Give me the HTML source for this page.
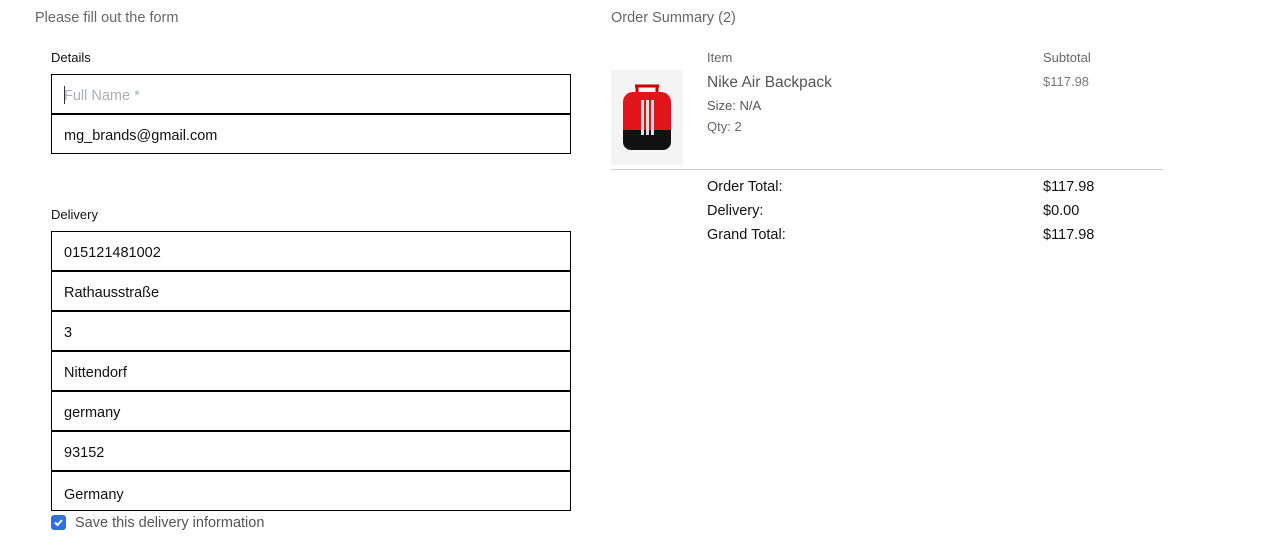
<!DOCTYPE html><html><head><style>
body{margin:0;width:1282px;height:548px;background:#fff;font-family:"Liberation Sans",sans-serif;position:relative;overflow:hidden}
.a{position:absolute;white-space:nowrap}
.box{position:absolute;left:51px;width:518px;height:38px;border:1px solid #000;font-size:14.5px;color:#111}
.box span{position:absolute;left:12px;top:13px}
</style></head><body>
<div class="a" style="left:35px;top:10px;font-size:14.5px;color:#666">Please fill out the form</div>
<div class="a" style="left:51px;top:50px;font-size:13px;color:#111">Details</div>
<div class="box" style="top:74px"><span style="color:#a8b0b8">Full Name *</span><div style="position:absolute;left:12px;top:11px;width:1px;height:18px;background:#333"></div></div>
<div class="box" style="top:114px"><span>mg_brands@gmail.com</span></div>
<div class="a" style="left:51px;top:207px;font-size:13px;color:#111">Delivery</div>
<div class="box" style="top:231px"><span>015121481002</span></div>
<div class="box" style="top:271px"><span>Rathausstraße</span></div>
<div class="box" style="top:311px"><span>3</span></div>
<div class="box" style="top:351px"><span>Nittendorf</span></div>
<div class="box" style="top:391px"><span>germany</span></div>
<div class="box" style="top:431px"><span>93152</span></div>
<div class="box" style="top:471px;overflow:hidden"><span style="top:15px">Germany</span></div>
<div class="a" style="left:51px;top:515px;width:15px;height:15px;background:#2f6fe8;border-radius:3px"><svg width="15" height="15"><path d="M4 7.5l2.5 2.5 4.5-5" stroke="#fff" stroke-width="2" fill="none"/></svg></div>
<div class="a" style="left:75px;top:515px;font-size:14.5px;color:#555">Save this delivery information</div>

<div class="a" style="left:611px;top:10px;font-size:14.5px;color:#666">Order Summary (2)</div>
<div class="a" style="left:707px;top:50px;font-size:13px;color:#666">Item</div>
<div class="a" style="left:1043px;top:50px;font-size:13px;color:#666">Subtotal</div>
<div class="a" style="left:611px;top:70px;width:72px;height:95px;background:#f4f4f4">
<svg width="72" height="95"><path d="M24 16h24" stroke="#c00" stroke-width="3"/><path d="M26 16v8M46 16v8" stroke="#c00" stroke-width="3"/><rect x="12" y="22" width="48" height="52" rx="10" fill="#e0141a"/><path d="M12 60h48v12a8 8 0 0 1-8 8H20a8 8 0 0 1-8-8z" fill="#111"/><rect x="30" y="30" width="3" height="35" fill="#ddd"/><rect x="35" y="30" width="3" height="35" fill="#ddd"/><rect x="40" y="30" width="3" height="35" fill="#ddd"/></svg></div>
<div class="a" style="left:707px;top:74px;font-size:15.5px;color:#555">Nike Air Backpack</div>
<div class="a" style="left:707px;top:98px;font-size:13px;color:#555">Size: N/A</div>
<div class="a" style="left:707px;top:119px;font-size:13px;color:#667">Qty: 2</div>
<div class="a" style="left:1043px;top:74px;font-size:13px;color:#777">$117.98</div>
<div class="a" style="left:611px;top:169px;width:552px;height:1px;background:#ccc"></div>
<div class="a" style="left:707px;top:175px;font-size:14.5px;color:#111;line-height:24px">Order Total:<br>Delivery:<br>Grand Total:</div>
<div class="a" style="left:1043px;top:175px;font-size:14.5px;color:#111;line-height:24px">$117.98<br>$0.00<br>$117.98</div>
</body></html>
